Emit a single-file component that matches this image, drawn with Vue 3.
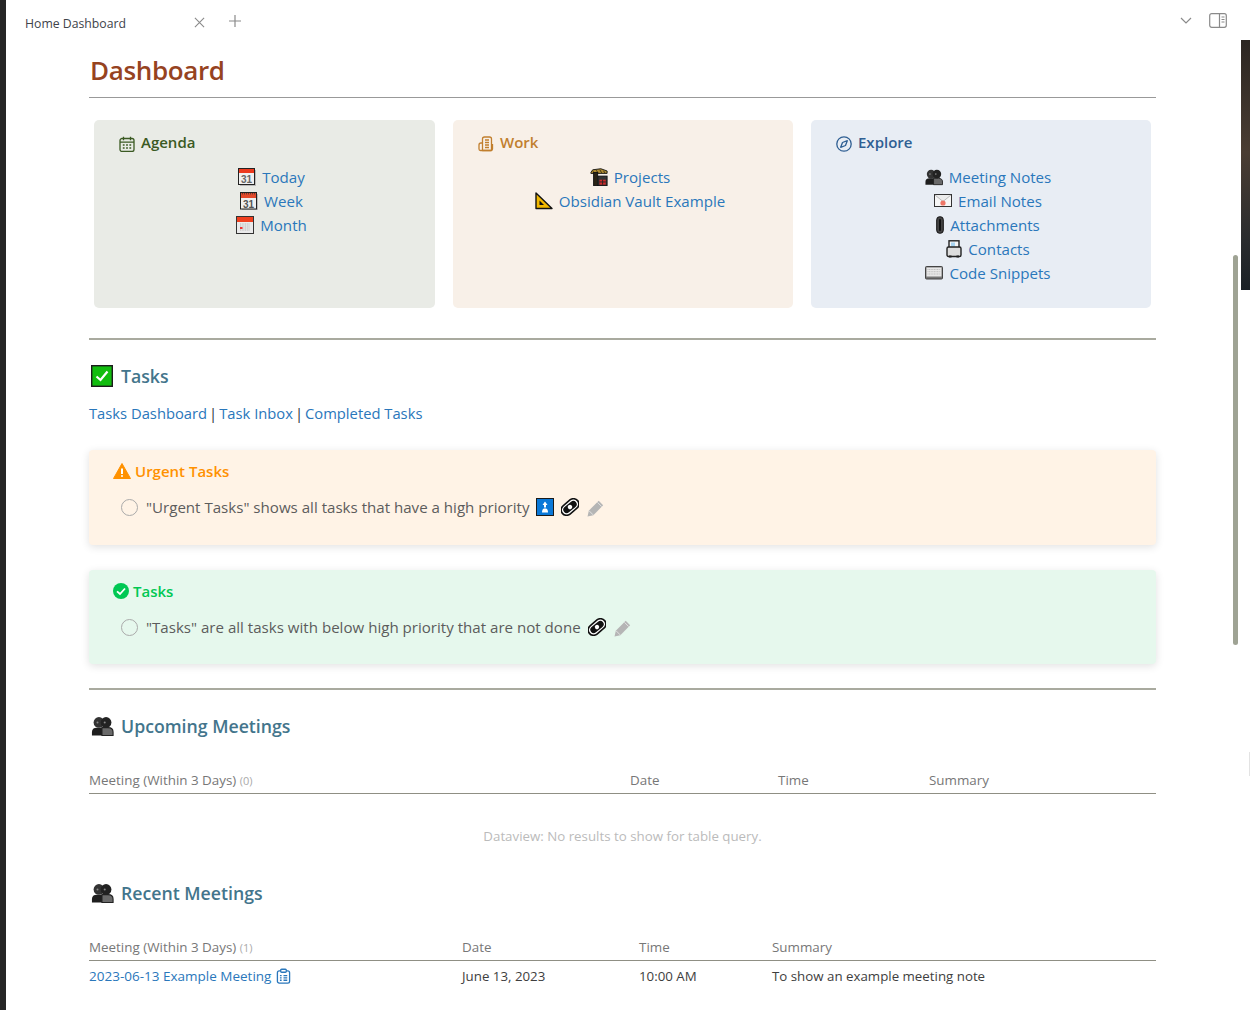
<script setup>
//DATA
const cards = [
  {
    title: 'Agenda', cls: 'agenda', icon: 'i-agenda',
    links: [
      {label: 'Today', icon: 'e-cal'},
      {label: 'Week', icon: 'e-cal2'},
      {label: 'Month', icon: 'e-month'}
    ]
  },
  {
    title: 'Work', cls: 'work', icon: 'i-work',
    links: [
      {label: 'Projects', icon: 'e-crane'},
      {label: 'Obsidian Vault Example', icon: 'e-ruler'}
    ]
  },
  {
    title: 'Explore', cls: 'explore', icon: 'i-compass',
    links: [
      {label: 'Meeting Notes', icon: 'e-people'},
      {label: 'Email Notes', icon: 'e-mail'},
      {label: 'Attachments', icon: 'e-clip', size: 'slim'},
      {label: 'Contacts', icon: 'e-card', size: 'narrow'},
      {label: 'Code Snippets', icon: 'e-keys'}
    ]
  }
]
</script>

<template>
  <div class="window">
    <svg class="sprite" width="0" height="0">
      <defs>
        <symbol id="i-agenda" viewBox="0 0 16 16">
          <g fill="none" stroke="currentColor" stroke-width="1.300">
            <rect x="1" y="2.500" width="14" height="13" rx="2"/>
            <path d="M1 6.200h14M4.500 .8v3.400M11.500 .8v3.400"/>
            <path d="M3.800 9h1.800M7.100 9h1.800M10.400 9h1.800M3.800 12h1.800M7.100 12h1.800M10.400 12h1.800"/>
          </g>
        </symbol>
        <symbol id="i-work" viewBox="0 0 16 16">
          <g fill="none" stroke="currentColor" stroke-width="1.300" stroke-linejoin="round">
            <path d="M4.500 14.500V3a2 2 0 0 1 2-2h5a2 2 0 0 1 2 2v11.500z"/>
            <path d="M4.500 7H3a2 2 0 0 0-2 2v4a1.500 1.500 0 0 0 1.500 1.500H13a1.500 1.500 0 0 0 1.500-1.500V8"/>
            <path d="M7 4h4M7 6.500h4M7 9h4M7 11.500h4"/>
          </g>
        </symbol>
        <symbol id="i-compass" viewBox="0 0 16 16">
          <circle cx="8" cy="8" r="7.200" fill="none" stroke="currentColor" stroke-width="1.300"/>
          <path d="M11.300 4.700 9.500 9.500 4.700 11.300 6.500 6.500z" fill="none" stroke="currentColor" stroke-width="1.300" stroke-linejoin="round"/>
        </symbol>
        <symbol id="i-clip" viewBox="0 0 16 16">
          <g fill="none" stroke="currentColor" stroke-width="1.400">
            <rect x="1.500" y="2.500" width="13" height="13" rx="2"/>
            <rect x="5" y="0.800" width="6" height="3.200" rx="1" fill="#fff"/>
            <path d="M4.200 7.500h1.800M8 7.500h4M4.200 10h1.800M8 10h4M4.200 12.500h1.800M8 12.500h4"/>
          </g>
        </symbol>
        <symbol id="e-cal" viewBox="0 0 18 18">
          <rect x="2" y="2" width="16" height="16" fill="#bbb"/>
          <rect x="0.500" y="0.500" width="16" height="16" fill="#f0f0f0" stroke="#222"/>
          <rect x="1" y="1" width="15" height="4" fill="#ec3a1e"/>
          <text x="8.500" y="14.500" font-size="10" font-weight="700" text-anchor="middle" fill="#666" font-family="Liberation Sans, sans-serif">31</text>
        </symbol>
        <symbol id="e-cal2" viewBox="0 0 18 18">
          <rect x="2" y="2" width="16" height="16" fill="#bbb"/>
          <rect x="0.500" y="0.500" width="16" height="16.500" fill="#f0f0f0" stroke="#222"/>
          <rect x="1" y="1" width="15" height="5" fill="#e2492b"/>
          <path d="M2 1.800h13" stroke="#333" stroke-dasharray="1 1"/>
          <text x="8.500" y="15.500" font-size="10" font-weight="700" text-anchor="middle" fill="#555" font-family="Liberation Sans, sans-serif">31</text>
        </symbol>
        <symbol id="e-month" viewBox="0 0 18 18">
          <rect x="0.500" y="0.500" width="17" height="17" fill="#eaeaea" stroke="#333"/>
          <rect x="1" y="1" width="16" height="5" fill="#f0401f"/>
          <path d="M4 8h10M4 10h10M4 12h10M4 14h10" stroke="#b5b5b5" stroke-dasharray="1 .7"/>
          <rect x="4" y="11" width="2.500" height="2" fill="#e33"/>
        </symbol>
        <symbol id="e-crane" viewBox="0 0 20 20">
          <path d="M1 5 3 2 12 .8l7 2.500V6H1z" fill="#b08c30" stroke="#111"/>
          <path d="M3 3.500 5 5.500M7 2.500l2 3M11 2l2 3.500M15 3l1.500 2.500" stroke="#3a2e10"/>
          <rect x="4" y="5" width="4.500" height="14.500" fill="#2a2416" stroke="#111"/>
          <rect x="9" y="9" width="10" height="10.500" fill="#333" stroke="#111"/>
          <rect x="10.500" y="13" width="7" height="5.500" fill="#d02a2a"/>
          <path d="M10.500 15.500h7M14 13v5.500" stroke="#222"/>
        </symbol>
        <symbol id="e-ruler" viewBox="0 0 18 18">
          <path d="M1 1v15.500h16z" fill="#f2b800" stroke="#111" stroke-width="1.400" stroke-linejoin="round"/>
          <path d="M4.500 8.500v4.500H9z" fill="#111"/>
        </symbol>
        <symbol id="e-people" viewBox="0 0 20 18">
          <circle cx="6.800" cy="5.800" r="4.800" fill="#333"/>
          <circle cx="13.200" cy="5.800" r="4.800" fill="#222"/>
          <path d="M.500 17.500v-3Q.500 10.500 5 10.500h5v7z" fill="#1e1e1e"/>
          <path d="M9.500 17.500v-7H15q4.500 0 4.500 4v3z" fill="#6a6a6a" stroke="#222"/>
          <circle cx="5.500" cy="5.800" r="0.900" fill="#888"/>
          <circle cx="12" cy="5.800" r="0.900" fill="#888"/>
        </symbol>
        <symbol id="e-mail" viewBox="0 0 18 14">
          <rect x="0.500" y="0.500" width="17" height="12" fill="#f6f6f6" stroke="#333"/>
          <path d="M1 1l8 6.500L17 1" fill="#ececec" stroke="#bbb"/>
          <circle cx="9" cy="9" r="2.600" fill="#ee7668"/>
        </symbol>
        <symbol id="e-clip" viewBox="0 0 8 18">
          <rect x="0.700" y="0.700" width="6.600" height="16.600" rx="3" fill="#444" stroke="#111"/>
          <rect x="3" y="3" width="2" height="12" rx="1" fill="#111"/>
        </symbol>
        <symbol id="e-card" viewBox="0 0 16 18">
          <rect x="3" y="0.800" width="10" height="8" fill="#f5f5f5" stroke="#222" stroke-width="1.400"/>
          <rect x="5" y="2.500" width="4" height="4" fill="#a8d4f0"/>
          <rect x="1" y="7" width="14" height="9.500" rx="1.500" fill="#ddd" stroke="#222" stroke-width="1.400"/>
          <rect x="3" y="15.500" width="2.500" height="2" fill="#222"/>
          <rect x="10.500" y="15.500" width="2.500" height="2" fill="#222"/>
        </symbol>
        <symbol id="e-keys" viewBox="0 0 18 14">
          <rect x="0.500" y="0.500" width="17" height="12.500" rx="1" fill="#777" stroke="#444"/>
          <rect x="1.500" y="1.500" width="15" height="9" fill="#e8e8e8"/>
          <path d="M2.500 3.500h13M2.500 5.700h13M2.500 8h13" stroke="#bcbcbc" stroke-dasharray="1 .6"/>
        </symbol>
        <symbol id="e-check" viewBox="0 0 22 22">
          <rect x="0.700" y="0.700" width="20.600" height="20.600" fill="#12bd0f" stroke="#1c1c1c" stroke-width="1.400"/>
          <path d="M5.500 11.500 9.500 15 16.500 6.500" fill="none" stroke="#fff" stroke-width="2.200"/>
        </symbol>
        <symbol id="e-up" viewBox="0 0 18 18">
          <rect x="0.500" y="0.500" width="17" height="17" fill="#0a78d8" stroke="#1a1a1a"/>
          <path d="M9 3.500 11.500 7H10v2.500H8V7H6.500zM6 14.500q0-3.500 2-4h2q2 .5 2 4z" fill="#fff"/>
        </symbol>
        <symbol id="e-link" viewBox="0 0 20 20">
          <g transform="rotate(-40 10 10)">
            <rect x="-1" y="4" width="22" height="12" rx="6" fill="#fff" stroke="#111" stroke-width="1.800"/>
            <rect x="1.500" y="6.200" width="17" height="7.600" rx="3.800" fill="#111"/>
            <circle cx="10" cy="10" r="2.400" fill="#fff"/>
          </g>
        </symbol>
        <symbol id="e-pencil" viewBox="0 0 16 16">
          <path d="M.500 15.500l1.200-5.500L11 .8 15.200 5 6 14.300z" fill="#b5b5b5"/>
          <path d="M2 10.200l3.800 3.800M9.800 2.200 13.800 6.200" stroke="#e8e8e8" stroke-width="0.800"/>
        </symbol>
      </defs>
    </svg>

    <aside class="strip"></aside>

    <div class="main">
      <header class="tabbar">
        <span class="tab-name">Home Dashboard</span>
        <svg class="tab-close" viewBox="0 0 12 12"><path d="M1 1l10 10M11 1 1 11"/></svg>
        <svg class="tab-plus" viewBox="0 0 12 12"><path d="M6 0v12M0 6h12"/></svg>
        <span class="spacer"></span>
        <svg class="tab-chevron" viewBox="0 0 12 7"><path d="M1 1l5 5 5-5"/></svg>
        <svg class="tab-side" viewBox="0 0 18 15">
          <rect x="0.700" y="0.700" width="16.600" height="13.600" rx="2"/>
          <path d="M10.500 1v13M12.500 4h3M12.500 6.500h3M12.500 9h3"/>
        </svg>
      </header>

      <main class="note">
        <h1>Dashboard</h1>

        <section class="cards">
          <div v-for="card in cards" :key="card.title" class="card" :class="card.cls">
            <div class="card-title">
              <svg class="card-icon"><use :href="'#' + card.icon"/></svg>
              {{card.title}}
            </div>
            <ul>
              <li v-for="link in card.links" :key="link.label">
                <svg class="emoji" :class="link.size"><use :href="'#' + link.icon"/></svg>
                <a>{{link.label}}</a>
              </li>
            </ul>
          </div>
        </section>

        <hr class="first">

        <h2><svg class="h-icon"><use href="#e-check"/></svg>Tasks</h2>
        <p class="quick">
          <a>Tasks Dashboard</a><span class="pipe">|</span><a>Task Inbox</a><span class="pipe">|</span><a>Completed Tasks</a>
        </p>

        <div class="callout urgent">
          <div class="callout-title">
            <svg class="callout-icon" viewBox="0 0 18 16">
              <path d="M9 .5.500 15.500h17z" fill="currentColor" stroke="currentColor" stroke-linejoin="round"/>
              <path d="M9 5.500v5.500M9 12.300v1.500" stroke="#fff" stroke-width="2"/>
            </svg>
            Urgent Tasks
          </div>
          <div class="task">
            <span class="radio"></span>
            <span>"Urgent Tasks" shows all tasks that have a high priority</span>
            <svg class="emoji"><use href="#e-up"/></svg>
            <svg class="emoji link"><use href="#e-link"/></svg>
            <svg class="pencil"><use href="#e-pencil"/></svg>
          </div>
        </div>

        <div class="callout done">
          <div class="callout-title">
            <svg class="callout-icon round" viewBox="0 0 16 16">
              <circle cx="8" cy="8" r="8" fill="currentColor"/>
              <path d="M4 8.300 7 11l5-5.500" fill="none" stroke="#fff" stroke-width="1.800"/>
            </svg>
            Tasks
          </div>
          <div class="task">
            <span class="radio"></span>
            <span>"Tasks" are all tasks with below high priority that are not done</span>
            <svg class="emoji link"><use href="#e-link"/></svg>
            <svg class="pencil"><use href="#e-pencil"/></svg>
          </div>
        </div>

        <hr class="second">

        <h2 class="meet"><svg class="h-icon people"><use href="#e-people"/></svg>Upcoming Meetings</h2>
        <div class="table-head upcoming">
          <span>Meeting (Within 3 Days) <small>(0)</small></span>
          <span>Date</span>
          <span>Time</span>
          <span>Summary</span>
        </div>
        <p class="no-results">Dataview: No results to show for table query.</p>

        <h2 class="meet recent-title"><svg class="h-icon people"><use href="#e-people"/></svg>Recent Meetings</h2>
        <div class="table-head recent">
          <span>Meeting (Within 3 Days) <small>(1)</small></span>
          <span>Date</span>
          <span>Time</span>
          <span>Summary</span>
        </div>
        <div class="table-row recent">
          <span><a>2023-06-13 Example Meeting</a> <svg class="row-icon"><use href="#i-clip"/></svg></span>
          <span>June 13, 2023</span>
          <span>10:00 AM</span>
          <span>To show an example meeting note</span>
        </div>
      </main>
    </div>

    <!-- bits of the window behind and the scrollbar -->
    <div class="behind"></div>
    <div class="behind-edge"></div>
    <div class="scrollbar"></div>
  </div>
</template>

<style>
html, body {
  margin: 0;
  background: #fff;
  overflow: hidden;
}
</style>

<style scoped>
.window {
  position: relative;
  display: flex;
  width: 1250px;
  height: 1010px;
  overflow: hidden;
  font-family: "Open Sans", "Noto Sans", sans-serif;
  color: #2e3338;
  background: #fff;
}
.sprite {
  position: absolute;
}
.strip {
  width: 6px;
  flex: none;
  background: #262626;
}
.main {
  flex: 1;
  min-width: 0;
}

/* TAB BAR */
.tabbar {
  display: flex;
  align-items: center;
  height: 40px;
  padding-left: 19px;
  padding-right: 23px;
  box-sizing: border-box;
}
.tab-name {
  width: 169px;
  font-size: 12.250px;
  color: #40434a;
  margin-top: 6px;
}
.tabbar svg {
  fill: none;
  stroke: #8a8a8a;
  stroke-width: 1.200;
}
.tab-close {
  width: 11px;
  height: 11px;
  margin-right: 24px;
  margin-top: 4px;
}
.tab-plus {
  width: 12px;
  height: 12px;
  margin-top: 2px;
}
.spacer {
  flex: 1;
}
.tab-chevron {
  width: 12px;
  height: 7px;
  margin-right: 17px;
}
.tab-side {
  width: 18px;
  height: 15px;
}

/* NOTE */
.note {
  padding-left: 83px;
  width: 1067px;
}
h1 {
  margin: 0;
  height: 58px;
  box-sizing: border-box;
  border-bottom: 1px solid #999;
  font-size: 26px;
  letter-spacing: -0.350px;
  line-height: 60px;
  font-weight: 600;
  color: #96431f;
  padding-left: 1px;
}
.cards {
  display: grid;
  grid-template-columns: 341px 340px 340px;
  column-gap: 18px;
  padding: 22px 5px 0;
}
.card {
  height: 188px;
  box-sizing: border-box;
  border-radius: 5px;
  padding: 9px 25px;
}
.card-title {
  display: flex;
  align-items: center;
  gap: 6px;
  height: 26px;
  font-size: 15px;
  font-weight: 600;
}
.card-icon {
  width: 16px;
  height: 16px;
  margin-top: 3px;
}
.agenda {
  background: #e9ebe6;
}
.agenda .card-title {
  color: #3b5a23;
}
.work {
  background: #f8f0e8;
}
.work .card-title {
  color: #c17f2e;
}
.explore {
  background: #e8edf4;
}
.explore .card-title {
  color: #2f5f93;
}
ul {
  list-style: none;
  margin: 10px 0 0;
  padding: 0 0 0 14px;
  text-align: center;
  font-size: 15.100px;
  line-height: 24px;
}
li {
  display: flex;
  justify-content: center;
  align-items: center;
  gap: 6px;
  height: 24px;
}
a {
  color: #2a77bb;
}
.emoji {
  width: 18px;
  height: 18px;
  flex: none;
}
.emoji.narrow {
  width: 16px;
}
.emoji.slim {
  width: 8px;
}
hr {
  border: 0;
  height: 2px;
  background: #a9aa9f;
  margin: 0;
}
hr.first {
  margin-top: 30px;
}
hr.second {
  margin-top: 24px;
}
h2 {
  display: flex;
  align-items: center;
  margin: 0;
  font-size: 17.700px;
  font-weight: 600;
  color: #43758c;
  height: 26px;
  margin-top: 23px;
}
.h-icon {
  width: 22px;
  height: 22px;
  margin: 0 8px 0 2px;
  flex: none;
}
.h-icon.people {
  width: 23px;
  height: 20px;
  margin-right: 7px;
}
.quick {
  margin: 12px 0 0;
  font-size: 14.750px;
  line-height: 24px;
}
.pipe {
  margin: 0 2px;
  color: #2e3338;
}

/* CALLOUTS */
.callout {
  height: 95px;
  box-sizing: border-box;
  border-radius: 4px;
  padding: 10px 24px;
  box-shadow: 0 2px 8px rgba(0, 0, 0, 0.12);
}
.urgent {
  margin-top: 25px;
  background: #fff3e6;
}
.urgent .callout-title {
  color: #ff9100;
}
.done {
  height: 94px;
  margin-top: 25px;
  background: #e6f8ed;
}
.done .callout-title {
  color: #00c853;
}
.callout-title {
  display: flex;
  align-items: center;
  gap: 4px;
  height: 22px;
  font-size: 15px;
  font-weight: 600;
}
.callout-icon {
  width: 18px;
  height: 16px;
}
.callout-icon.round {
  width: 16px;
}
.task {
  display: flex;
  align-items: center;
  margin-top: 13px;
  margin-left: 8px;
  height: 24px;
  font-size: 15.100px;
  color: #5c5c5c;
}
.radio {
  width: 15px;
  height: 15px;
  border: 1px solid #aaa;
  border-radius: 50%;
  margin-right: 8px;
  flex: none;
}
.task .emoji {
  margin-left: 6px;
}
.task .link {
  margin-left: 7px;
  width: 18px;
}
.pencil {
  width: 17px;
  height: 17px;
  margin-left: 8px;
  margin-top: 2px;
}

/* TABLES */
.meet {
  margin-top: 23px;
}
.recent-title {
  margin-top: 34px;
}
.table-head,
.table-row {
  display: grid;
  font-size: 13.300px;
}
.table-head {
  height: 26px;
  align-items: center;
  color: #777;
  font-size: 13.400px;
  border-bottom: 1px solid #8f8f84;
  margin-top: 28px;
}
.table-head small {
  font-size: 11px;
  color: #aaa;
}
.table-head.upcoming {
  grid-template-columns: 541px 148px 151px 1fr;
}
.recent {
  grid-template-columns: 373px 177px 133px 1fr;
}
.table-row {
  height: 30px;
  align-items: center;
  color: #3e3e3e;
}
.table-row a {
  font-size: 13.500px;
}
.table-row span {
  display: flex;
  align-items: center;
  gap: 5px;
}
.row-icon {
  width: 15px;
  height: 16px;
  color: #2a77bb;
}
.no-results {
  margin: 32px 0 0;
  height: 20px;
  line-height: 20px;
  text-align: center;
  font-size: 13.300px;
  color: #bbb;
}

/* OVERLAYS */
.behind {
  position: absolute;
  right: 0;
  top: 40px;
  width: 9px;
  height: 250px;
  background: linear-gradient(180deg, #2c2622, #4a3d33 45%, #2a2c2e 80%, #1a2026);
}
.behind-edge {
  position: absolute;
  right: 0;
  top: 752px;
  width: 1px;
  height: 24px;
  background: #e3e3e3;
}
.scrollbar {
  position: absolute;
  left: 1233px;
  top: 255px;
  width: 5px;
  height: 390px;
  border-radius: 3px;
  background: #9fa394;
}
</style>
